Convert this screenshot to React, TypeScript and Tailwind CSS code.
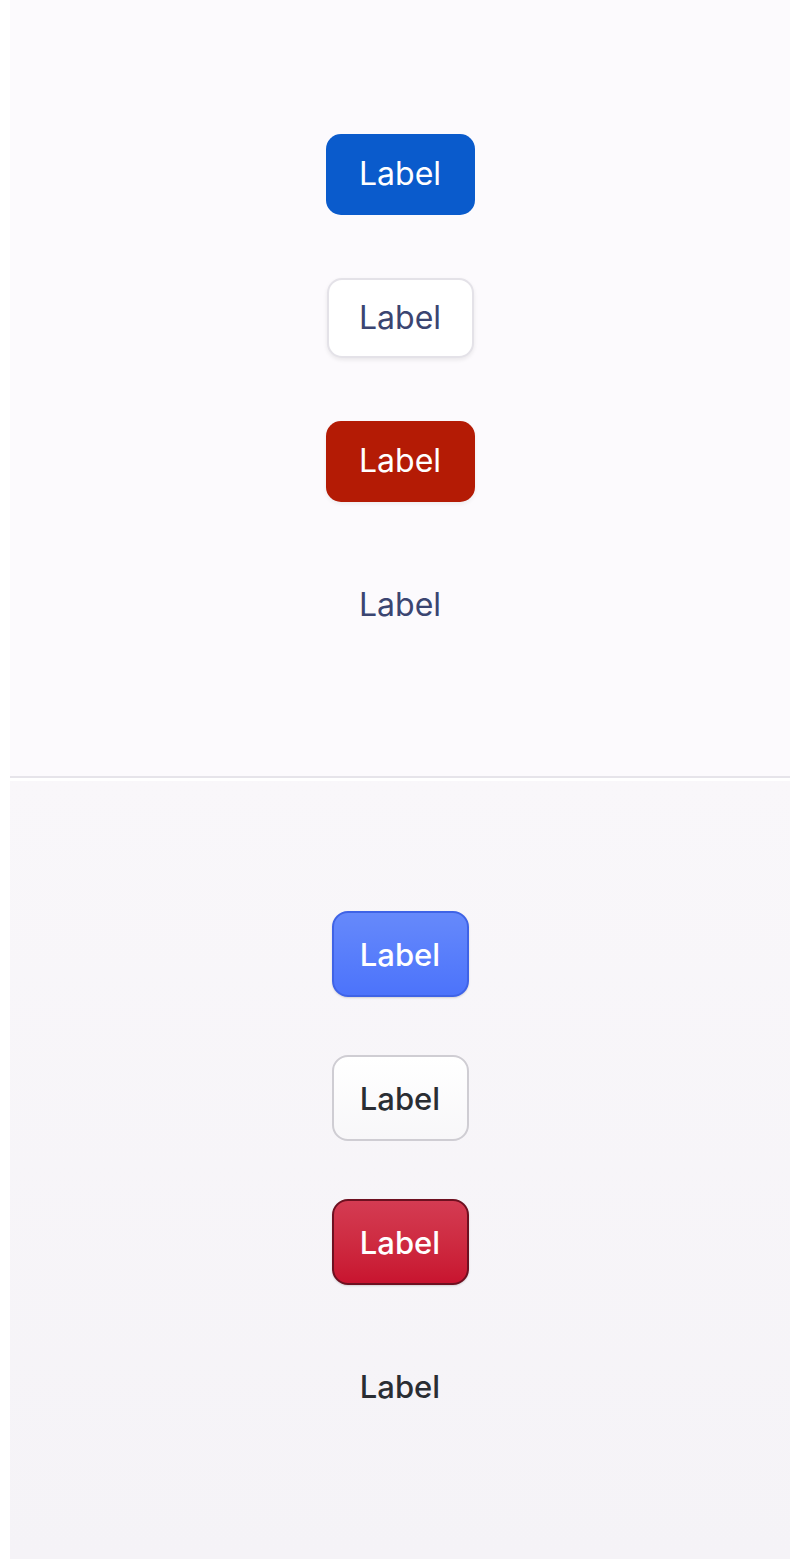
import React from "react"

const font = { fontFamily: "Inter, 'Noto Sans', sans-serif" }

export default function App() {
    return (
        <div className="min-h-[1559px] bg-white px-[10px]" style={font}>
            {/* Top panel - flat buttons */}
            <div className="h-[778px] border-b-2 border-[#e6e4ea] bg-[#fcfafd] pt-[3px] flex flex-col items-center justify-center gap-[63px]">
                <button className="w-[149px] h-[81px] rounded-[15px] bg-[#0a5bcc] text-white text-[32px] leading-none">
                    Label
                </button>
                <button className="w-[147px] h-[80px] rounded-[15px] bg-white border-2 border-[#e4e2e8] shadow-[0_2px_4px_rgba(0,0,0,0.08)] text-[#3b4571] text-[32px] leading-none">
                    Label
                </button>
                <button className="w-[149px] h-[81px] rounded-[15px] bg-[#b41b05] shadow-[0_2px_4px_rgba(0,0,0,0.06)] text-white text-[32px] leading-none">
                    Label
                </button>
                <button className="w-[149px] h-[81px] text-[#3b4571] text-[32px] leading-none">
                    Label
                </button>
            </div>

            {/* Bottom panel - bevelled buttons */}
            <div className="mt-[3px] h-[778px] bg-gradient-to-b from-[#f9f7fa] to-[#f5f3f7] flex flex-col items-center justify-center gap-[58px]">
                <button className="w-[137px] h-[86px] rounded-[16px] border-2 border-[#3f63e6] bg-gradient-to-b from-[#6689fb] to-[#4c73fb] shadow-[0_1px_2px_rgba(0,0,0,0.15)] text-white text-[31px] font-medium leading-none">
                    Label
                </button>
                <button className="w-[137px] h-[86px] rounded-[16px] border-2 border-[#cfcdd3] bg-gradient-to-b from-white to-[#f8f7f9] text-[#2a2d33] text-[31px] font-medium leading-none">
                    Label
                </button>
                <button className="w-[137px] h-[86px] rounded-[16px] border-2 border-[#6e1020] bg-gradient-to-b from-[#d43b52] to-[#c8132f] shadow-[0_1px_2px_rgba(0,0,0,0.15)] text-white text-[31px] font-medium leading-none">
                    Label
                </button>
                <button className="w-[137px] h-[86px] text-[#2a2d33] text-[31px] font-medium leading-none">
                    Label
                </button>
            </div>
        </div>
    )
}
